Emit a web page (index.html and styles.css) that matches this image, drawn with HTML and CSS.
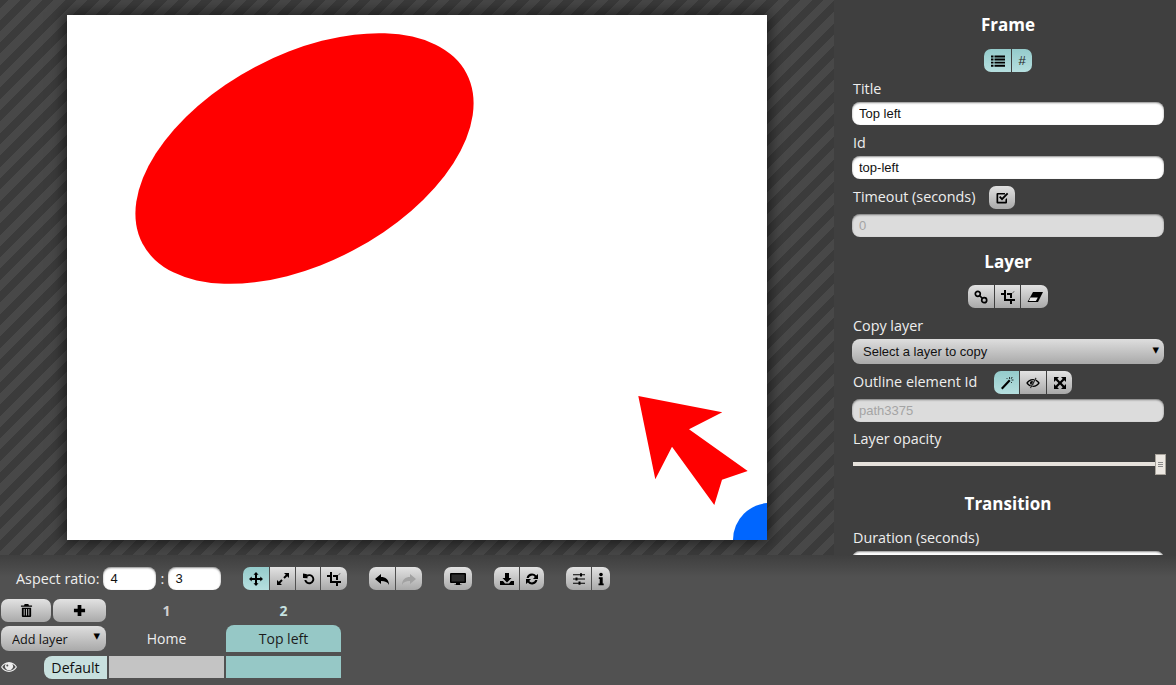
FILE: index.html
```html
<!DOCTYPE html>
<html lang="en">
<head>
<meta charset="utf-8">
<title>Frame editor</title>
<link rel="stylesheet" href="styles.css">
</head>
<body>
<svg class="sprite" xmlns="http://www.w3.org/2000/svg">
  <symbol id="i-list" viewBox="0 0 14 14"><path d="M0 1.500h2.500v1.900H0zM3.500 1.500H14v1.900H3.500zM0 4.600h2.500v1.900H0zM3.500 4.600H14v1.900H3.500zM0 7.700h2.500v1.900H0zM3.500 7.700H14v1.900H3.500zM0 10.800h2.500v1.900H0zM3.500 10.800H14v1.900H3.500z"/></symbol>
  <symbol id="i-check" viewBox="0 0 14 14"><path d="M2.500 2H10v1.600H3.200v7.200h7.200V8.500L12 7v4.500a1 1 0 0 1-1 1H2.500a1 1 0 0 1-1-1V3a1 1 0 0 1 1-1z"/><path d="M4 6.300l1.300-1.300 1.700 1.800 5-5 1.300 1.300-6.300 6.300z"/></symbol>
  <symbol id="i-link" viewBox="0 0 14 14"><g fill="none" stroke="currentColor" stroke-width="1.700"><circle cx="3.800" cy="3.800" r="2.500"/><circle cx="10.200" cy="10.200" r="2.500"/><path d="M5.500 5.500l3 3"/></g></symbol>
  <symbol id="i-crop" viewBox="0 0 14 14"><path d="M3 0h2v9h9v2h-3v3H9v-3H3V5H0V3h3z"/><path d="M6 3h5v5H9V5H6z"/><path d="M11 3l2-2 .6.6-2 2z" opacity=".5"/></symbol>
  <symbol id="i-eraser" viewBox="0 0 16 14"><path d="M6 2h10l-5 10H0.500z"/><path d="M3.400 7.500h7.400L8.900 10.900H1.900z" fill="#e8e8e8"/></symbol>
  <symbol id="i-wand" viewBox="0 0 14 14"><path d="M9 3.500l1.500 1.500L2.500 13.500 1 12z"/><path d="M9 1h1v2H9zM11.500 3.500h2v1h-2zM12 .8l.7.7-1.400 1.400-.7-.7zM6.500 2l1 0 0 1-1 0zM11 6h1v1h-1z" opacity=".75"/></symbol>
  <symbol id="i-eye-off" viewBox="0 0 14 14"><path d="M7 3c3.200 0 5.600 2 6.800 4-1.200 2-3.600 4-6.800 4S1.400 9 .2 7C1.400 5 3.800 3 7 3zm0 1.300C4.900 4.300 3 5.500 1.900 7 3 8.500 4.900 9.700 7 9.700S11 8.500 12.100 7C11 5.500 9.100 4.300 7 4.300z"/><circle cx="6" cy="7" r="2.100"/><path d="M9.500 1.500l1.200.7L5 12.500l-1.200-.7z" stroke="#c8c8c8" stroke-width=".5"/></symbol>
  <symbol id="i-full" viewBox="0 0 14 14"><path d="M1 1h5L4.300 2.700 7 5.400 9.700 2.700 8 1h5v5l-1.700-1.700L8.600 7l2.700 2.700L13 8v5H8l1.700-1.700L7 8.600l-2.700 2.700L6 13H1V8l1.700 1.700L5.400 7 2.700 4.300 1 6z"/></symbol>
  <symbol id="i-move" viewBox="0 0 14 14"><path d="M7 0l2.500 2.700H8V6h3.300V4.500L14 7l-2.700 2.500V8H8v3.300h1.500L7 14l-2.500-2.700H6V8H2.700v1.500L0 7l2.700-2.500V6H6V2.700H4.500z"/></symbol>
  <symbol id="i-resize" viewBox="0 0 14 14"><path d="M8 1h5v5l-1.800-1.800-2.500 2.500-1.400-1.400 2.500-2.500zM6 13H1V8l1.800 1.800 2.500-2.500 1.400 1.400-2.500 2.500z"/></symbol>
  <symbol id="i-rotate" viewBox="0 0 14 14"><path d="M1 1.500l4.300.7-1.300 1.300a5 5 0 1 1-1.700 4.500h2a3.100 3.100 0 1 0 1-3.200L5.700 6.200 1 6z" transform="translate(1 0)"/></symbol>
  <symbol id="i-undo" viewBox="0 0 14 14"><path d="M6 2v3c4.500 0 8 2.500 8 8-1.300-3-3.800-4-8-4v3L0 7z"/></symbol>
  <symbol id="i-redo" viewBox="0 0 14 14"><path d="M8 2v3c-4.500 0-8 2.500-8 8 1.300-3 3.800-4 8-4v3l6-5z"/></symbol>
  <symbol id="i-monitor" viewBox="0 0 16 14"><path d="M1 1h14a1 1 0 0 1 1 1v8a1 1 0 0 1-1 1H1a1 1 0 0 1-1-1V2a1 1 0 0 1 1-1z"/><path d="M1.500 2.500h13v7h-13z" fill="#2c2c2c"/><path d="M6 11h4v1.500h1.500V13h-7v-.5H6z"/></symbol>
  <symbol id="i-import" viewBox="0 0 14 14"><path d="M5 1h4v5h2.500L7 10.500 2.500 6H5z"/><path d="M0 9h3l2 2.500h4l2-2.500h3v4H0z"/></symbol>
  <symbol id="i-refresh" viewBox="0 0 14 14"><path d="M7 1.500c1.700 0 3.200.8 4.200 2L13 2v5H8l1.800-2A3.500 3.500 0 0 0 3.700 6H1.600A5.500 5.500 0 0 1 7 1.500zM1 7h5L4.200 9a3.500 3.500 0 0 0 6.100-1h2.100a5.500 5.500 0 0 1-9.600 2.500L1 12z"/></symbol>
  <symbol id="i-sliders" viewBox="0 0 14 14"><path d="M1 2.300h12v1H1zM1 6.500h12v1H1zM1 10.700h12v1H1z"/><path d="M8 1.200h2v3.200H8zM3.500 5.400h2v3.200h-2zM6.500 9.600h2v3.200h-2z"/></symbol>
  <symbol id="i-info" viewBox="0 0 14 14"><circle cx="7" cy="2.500" r="1.800"/><path d="M4.800 5.300h3.900v6.200h1V13.300H4.500v-1.800h1.200V7.100H4.800z"/></symbol>
  <symbol id="i-trash" viewBox="0 0 14 14"><path d="M5 0h4l.6 1.500H13V3H1V1.500h3.400z"/><path d="M2 4h10v9a1 1 0 0 1-1 1H3a1 1 0 0 1-1-1zm2 1.500V12.500h1V5.500zm2.500 0V12.500h1V5.500zm2.500 0V12.500h1V5.500z" fill-rule="evenodd"/></symbol>
  <symbol id="i-plus" viewBox="0 0 14 14"><path d="M5 1h4v4h4v4H9v4H5V9H1V5h4z"/></symbol>
  <symbol id="i-eye" viewBox="0 0 16 12"><path fill-rule="evenodd" d="M8 1c3.600 0 6.500 2.300 8 5-1.500 2.700-4.400 5-8 5S1.500 8.700 0 6c1.500-2.700 4.400-5 8-5zM4.700 2.900C3.300 3.500 2.100 4.600 1.300 6c1.500 2.300 3.900 3.900 6.700 3.900s5.200-1.600 6.700-3.900c-.8-1.400-2-2.500-3.400-3.100a4 4 0 1 1-6.600 0zM6.300 3.500a1 1 0 1 0 0 2 1 1 0 0 0 0-2z"/></symbol>
</svg>

<div class="app">
  <div class="workspace">
    <section class="canvas">
      <div class="stage">
        <svg class="artwork" viewBox="0 0 700 525" xmlns="http://www.w3.org/2000/svg">
          <ellipse cx="237.500" cy="143.500" rx="183" ry="104" transform="rotate(-27.700 237.500 143.500)" fill="#ff0000"/>
          <path d="M571.300 381 655.300 397.300 622 414.300 680.700 456 655 464.700 647.300 490 605 431.700 588.300 464.300z" fill="#ff0000"/>
          <circle cx="703" cy="525" r="37" fill="#0066ff"/>
        </svg>
      </div>
    </section>

    <aside class="side">
      <h2 class="heading heading-first">Frame</h2>
      <div class="center gap-12">
        <div class="group">
          <button class="seg on w27"><svg class="ico"><use href="#i-list"/></svg></button>
          <button class="seg on w20 hash">#</button>
        </div>
      </div>
      <label class="label gap-7">Title</label>
      <input class="input gap-3" value="Top left">
      <label class="label gap-8">Id</label>
      <input class="input gap-3" value="top-left">
      <div class="inline gap-7">
        <label class="label">Timeout (seconds)</label>
        <button class="seg single w26"><svg class="ico"><use href="#i-check"/></svg></button>
      </div>
      <input class="input gap-5" value="0" disabled>

      <h2 class="heading gap-13">Layer</h2>
      <div class="center gap-11">
        <div class="group">
          <button class="seg w26"><svg class="ico"><use href="#i-link"/></svg></button>
          <button class="seg w25"><svg class="ico"><use href="#i-crop"/></svg></button>
          <button class="seg w27"><svg class="ico ico-wide"><use href="#i-eraser"/></svg></button>
        </div>
      </div>
      <label class="label gap-8">Copy layer</label>
      <div class="select-wrap gap-3">
        <select class="select"><option>Select a layer to copy</option></select>
      </div>
      <div class="inline inline-wide gap-7">
        <label class="label">Outline element Id</label>
        <div class="group">
          <button class="seg on w25"><svg class="ico"><use href="#i-wand"/></svg></button>
          <button class="seg w26"><svg class="ico"><use href="#i-eye-off"/></svg></button>
          <button class="seg w25"><svg class="ico"><use href="#i-full"/></svg></button>
        </div>
      </div>
      <input class="input gap-5" value="path3375" disabled>
      <label class="label gap-7">Layer opacity</label>
      <input class="range" type="range" min="0" max="100" value="100">

      <h2 class="heading gap-18">Transition</h2>
      <label class="label gap-12">Duration (seconds)</label>
      <input class="input gap-3" value="1">
    </aside>
  </div>

  <footer class="dock">
    <div class="toolbar">
      <label class="label">Aspect ratio:</label>
      <input class="input ratio" value="4">
      <span class="label colon">:</span>
      <input class="input ratio" value="3">
      <div class="group tool">
        <button class="seg on w26"><svg class="ico"><use href="#i-move"/></svg></button>
        <button class="seg w25"><svg class="ico"><use href="#i-resize"/></svg></button>
        <button class="seg w24"><svg class="ico"><use href="#i-rotate"/></svg></button>
        <button class="seg w26"><svg class="ico"><use href="#i-crop"/></svg></button>
      </div>
      <div class="group tool">
        <button class="seg w26"><svg class="ico"><use href="#i-undo"/></svg></button>
        <button class="seg w26 dim"><svg class="ico"><use href="#i-redo"/></svg></button>
      </div>
      <div class="group tool">
        <button class="seg w28"><svg class="ico ico-wide"><use href="#i-monitor"/></svg></button>
      </div>
      <div class="group tool">
        <button class="seg w25"><svg class="ico"><use href="#i-import"/></svg></button>
        <button class="seg w24"><svg class="ico"><use href="#i-refresh"/></svg></button>
      </div>
      <div class="group tool">
        <button class="seg w25"><svg class="ico"><use href="#i-sliders"/></svg></button>
        <button class="seg w18"><svg class="ico"><use href="#i-info"/></svg></button>
      </div>
    </div>

    <div class="timeline">
      <div class="tl-actions">
        <button class="seg single act-del"><svg class="ico ico-s"><use href="#i-trash"/></svg></button>
        <button class="seg single act-add"><svg class="ico ico-s"><use href="#i-plus"/></svg></button>
      </div>
      <div class="frame-num">1</div>
      <div class="frame-num current">2</div>

      <div class="select-wrap select-small">
        <select class="select"><option>Add layer</option></select>
      </div>
      <div class="frame-name">Home</div>
      <div class="frame-name current">Top left</div>

      <div class="layer-head">
        <svg class="eye"><use href="#i-eye"/></svg>
        <span class="layer-name">Default</span>
      </div>
      <div class="cell"></div>
      <div class="cell current"></div>
    </div>
  </footer>
</div>
</body>
</html>
```

FILE: styles.css
```css
* { box-sizing: border-box; }

html, body {
  margin: 0;
  height: 100%;
  overflow: hidden;
}

body {
  font-family: "Open Sans", "Noto Sans", sans-serif;
  font-size: 14px;
  color: #eeeeee;
  background: #3f3f3f;
}

.sprite { display: none; }

.app {
  display: flex;
  flex-direction: column;
  height: 685px;
}

.workspace {
  display: flex;
  height: 555px;
  flex: none;
}

.canvas {
  width: 834px;
  flex: none;
  display: flex;
  align-items: center;
  justify-content: center;
  background: repeating-linear-gradient(-45deg, #3b3b3b 0, #3b3b3b 8px, #484848 8px, #484848 16px);
}

.stage {
  width: 700px;
  height: 525px;
  background: #ffffff;
  box-shadow: 0 0 14px 3px rgba(0, 0, 0, 0.55);
}

.artwork {
  display: block;
  width: 700px;
  height: 525px;
}

.side {
  width: 342px;
  flex: none;
  height: 555px;
  overflow: hidden;
  padding: 0 12px 0 18px;
  background: #3f3f3f;
  display: flex;
  flex-direction: column;
  align-items: stretch;
}

.heading {
  margin: 0;
  font-size: 17px;
  line-height: 24px;
  font-weight: 700;
  text-align: center;
  color: #ffffff;
  flex: none;
}

.heading-first { margin-top: 13px; }

.center { display: flex; justify-content: center; flex: none; }

.label {
  display: block;
  font-size: 14.350px;
  line-height: 20px;
  color: #eeeeee;
  flex: none;
  padding-left: 1px;
}

.gap-3 { margin-top: 3px; }
.gap-5 { margin-top: 5px; }
.gap-7 { margin-top: 7px; }
.gap-8 { margin-top: 8px; }
.gap-11 { margin-top: 11px; }
.gap-12 { margin-top: 12px; }
.gap-13 { margin-top: 13px; }
.gap-18 { margin-top: 18px; }

.input {
  display: block;
  width: 100%;
  height: 23px;
  flex: none;
  border: 0;
  border-radius: 8px;
  padding: 0 7px;
  font-family: "Liberation Sans", sans-serif;
  font-size: 13px;
  color: #111111;
  background: #ffffff;
  box-shadow: inset 0 1px 2px rgba(0, 0, 0, 0.45);
  outline: none;
}

.input:disabled {
  background: #dcdcdc;
  color: #a4a4a4;
  opacity: 1;
}

.group {
  display: inline-flex;
  gap: 1px;
  border-radius: 7px;
  overflow: hidden;
  flex: none;
}

.seg {
  height: 23px;
  flex: none;
  border: 0;
  padding: 0;
  display: flex;
  align-items: center;
  justify-content: center;
  color: #000000;
  font-family: "Liberation Sans", sans-serif;
  font-size: 13px;
  background: linear-gradient(#e2e2e2, #a9a9a9);
}

.seg.on { background: linear-gradient(#94cbcb, #b6dfdf); }
.seg.dim { color: #a2a2a2; }
.seg.single { border-radius: 7px; }
.seg.hash { color: #222222; }

.w18 { width: 18px; }
.w20 { width: 20px; }
.w24 { width: 24px; }
.w25 { width: 25px; }
.w26 { width: 26px; }
.w27 { width: 27px; }
.w28 { width: 28px; }

.ico {
  width: 14px;
  height: 14px;
  fill: currentColor;
  display: block;
}

.ico-wide { width: 16px; }
.ico-s { width: 13px; height: 13px; }

.inline {
  display: flex;
  align-items: flex-start;
  gap: 14px;
  flex: none;
}

.inline .label { margin-top: 1px; }

.inline-wide { gap: 17px; }

.select-wrap {
  position: relative;
  flex: none;
}

.select-wrap::after {
  content: "\25BE";
  position: absolute;
  right: 5px;
  top: 1px;
  font-family: "DejaVu Sans", sans-serif;
  font-size: 13px;
  line-height: 20px;
  color: #000000;
  pointer-events: none;
}

.select {
  display: block;
  width: 100%;
  height: 25px;
  border: 0;
  border-radius: 8px;
  padding: 0 11px;
  appearance: none;
  font-family: "Liberation Sans", sans-serif;
  font-size: 13px;
  color: #111111;
  background: linear-gradient(#dedede, #a9a9a9);
  outline: none;
}

.range {
  display: block;
  flex: none;
  height: 20px;
  margin: 5px 0 0 1px;
  width: 313px;
  padding: 0;
  appearance: none;
  background: transparent;
  outline: none;
}

.range::-webkit-slider-runnable-track {
  height: 4px;
  background: #e6e2dc;
}

.range::-webkit-slider-thumb {
  appearance: none;
  width: 11px;
  height: 21px;
  margin-top: -8px;
  border: 1px solid #a8a49c;
  background:
    linear-gradient(#8a8a8a, #8a8a8a) center 7px / 5px 1px no-repeat,
    linear-gradient(#8a8a8a, #8a8a8a) center 9px / 5px 1px no-repeat,
    linear-gradient(#8a8a8a, #8a8a8a) center 11px / 5px 1px no-repeat,
    #ece8e2;
}

.dock {
  flex: 1;
  min-height: 0;
  padding-top: 12px;
  background: linear-gradient(#3f3f3f, #515151 22px);
}

.toolbar {
  display: flex;
  align-items: center;
  height: 23px;
  padding-left: 15px;
}

.ratio {
  width: 53px;
  margin-left: 4px;
}

.colon {
  width: 12px;
  padding: 0;
  text-align: center;
}

.colon + .ratio { margin-left: 0; }

.tool { margin-left: 22px; }

.timeline {
  display: grid;
  grid-template-columns: 106px 115px 115px;
  grid-template-rows: 23px 27px 23px;
  column-gap: 2px;
  row-gap: 3px;
  margin-top: 9px;
  padding-left: 1px;
}

.tl-actions {
  display: flex;
  gap: 2px;
  width: 105px;
}

.act-del { width: 50px; }
.act-add { width: 53px; }

.frame-num {
  text-align: center;
  font-size: 14px;
  line-height: 24px;
  font-weight: 700;
  color: #d0d0d0;
}

.frame-num.current {
  color: #c6e2e0;
}

.select-small {
  width: 105px;
  margin-top: 1px;
}

.select-small .select {
  padding: 0 11px;
  font-family: "Open Sans", "Noto Sans", sans-serif;
  font-size: 12.700px;
}

.select-small::after { top: 0; right: 6px; }

.frame-name {
  display: flex;
  align-items: center;
  justify-content: center;
  font-size: 14px;
  color: #eeeeee;
}

.frame-name.current {
  background: #96c8c6;
  color: #1c1c1c;
  border-radius: 8px 8px 0 0;
}

.layer-head {
  display: flex;
  align-items: center;
  justify-content: space-between;
  margin-top: 1px;
}

.eye {
  width: 16px;
  height: 12px;
  fill: #eeeeee;
  display: block;
}

.layer-name {
  width: 63px;
  height: 23px;
  display: flex;
  align-items: center;
  justify-content: center;
  font-size: 14.200px;
  color: #111111;
  background: #c8e0de;
  border-radius: 8px 0 0 8px;
}

.cell {
  background: #c4c4c4;
  margin-top: 1px;
}

.cell.current { background: #96c8c6; }
```
